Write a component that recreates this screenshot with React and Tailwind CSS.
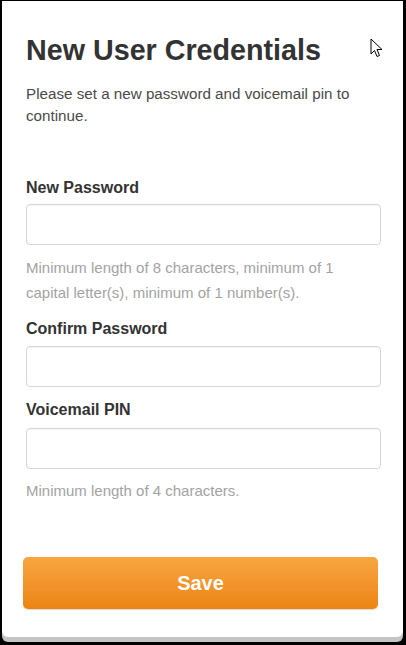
export default function App() {
  return (
    <div
      className="w-[406px] h-[645px] bg-black pt-[1px] pl-[2px] pr-[3px] pb-[3px] flex flex-col"
      style={{ fontFamily: '"Liberation Sans", Arial, sans-serif' }}
    >
      <div className="flex-1 flex flex-col bg-[#c4c4c4] rounded-b-[6px] pb-[5px]">
        <div className="relative flex-1 bg-white rounded-b-[6px] pl-[24px] pr-[22px] pt-[33px] flex flex-col">
          <svg
            className="absolute left-[368px] top-[37px]"
            width="14"
            height="21"
            viewBox="0 0 14 21"
          >
            <path
              d="M1 1 L1 16 L4.5 12.5 L7 18.5 L9.5 17.5 L7 11.5 L12 11.5 Z"
              fill="white"
              stroke="black"
              strokeWidth="1"
              strokeLinejoin="miter"
            />
          </svg>
          <h1 className="text-[28.7px] leading-[32px] font-bold text-[#333333]">
            New User Credentials
          </h1>
          <p className="mt-[17px] text-[15.2px] leading-[22px] text-[#4a4a4a]">
            Please set a new password and voicemail pin to continue.
          </p>

          <label className="mt-[51px] block text-[16px] leading-[20px] font-bold text-[#333333]">
            New Password
          </label>
          <input
            type="password"
            className="mt-[6px] h-[41px] w-full rounded-[4px] border border-[#d6d6d6] bg-white shadow-[inset_0_1px_1px_rgba(0,0,0,0.04)] outline-none"
          />
          <p className="mt-[10px] text-[15px] leading-[25px] text-[#a3a3a3]">
            Minimum length of 8 characters, minimum of 1 capital letter(s), minimum of 1 number(s).
          </p>

          <label className="mt-[14px] block text-[16px] leading-[20px] font-bold text-[#333333]">
            Confirm Password
          </label>
          <input
            type="password"
            className="mt-[7px] h-[41px] w-full rounded-[4px] border border-[#d6d6d6] bg-white shadow-[inset_0_1px_1px_rgba(0,0,0,0.04)] outline-none"
          />

          <label className="mt-[13px] block text-[16px] leading-[20px] font-bold text-[#333333]">
            Voicemail PIN
          </label>
          <input
            type="password"
            className="mt-[8px] h-[41px] w-full rounded-[4px] border border-[#d6d6d6] bg-white shadow-[inset_0_1px_1px_rgba(0,0,0,0.04)] outline-none"
          />
          <p className="mt-[10px] text-[15px] leading-[24px] text-[#a3a3a3]">
            Minimum length of 4 characters.
          </p>

          <button className="mt-[54px] -ml-[3px] h-[52px] w-[355px] rounded-[5px] bg-gradient-to-b from-[#f9a63f] to-[#ec8410] text-white text-[20px] font-bold shadow-[0_1px_1px_rgba(0,0,0,0.15)]">
            Save
          </button>
        </div>
      </div>
    </div>
  );
}
